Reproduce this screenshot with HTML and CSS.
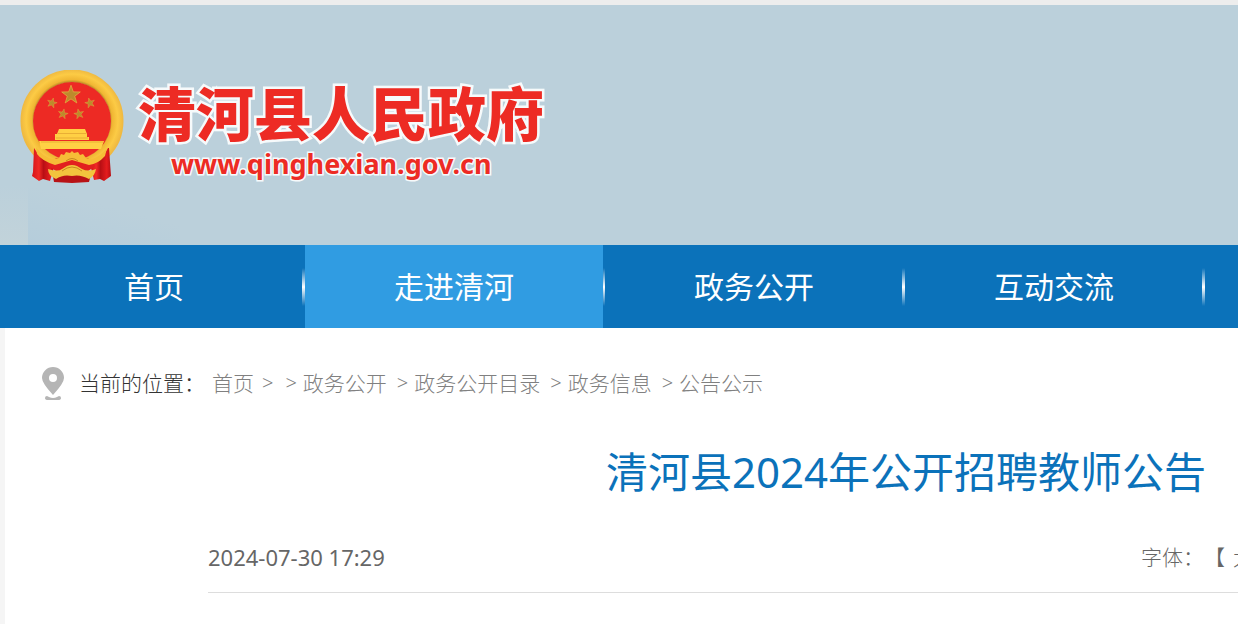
FILE: index.html
```html
<!DOCTYPE html>
<html lang="zh-CN">
<head>
<meta charset="utf-8">
<meta name="viewport" content="width=device-width, initial-scale=1">
<title>清河县2024年公开招聘教师公告</title>
<link rel="stylesheet" href="styles.css">
</head>
<body>
<header class="banner">
  <svg class="emblem" viewBox="0 0 104 114" aria-hidden="true">
    <defs>
      <radialGradient id="gold" gradientUnits="userSpaceOnUse" cx="52" cy="50" r="51">
        <stop offset=".75" stop-color="#c39029"/>
        <stop offset=".79" stop-color="#f0b633"/>
        <stop offset=".9" stop-color="#fccb45"/>
        <stop offset="1" stop-color="#efb941"/>
      </radialGradient>
      <linearGradient id="cloth" x1="0" x2="1" y1="0" y2="0">
        <stop offset="0" stop-color="#d5141a"/>
        <stop offset=".3" stop-color="#f02a25"/>
        <stop offset=".5" stop-color="#b90f14"/>
        <stop offset=".8" stop-color="#e41c1e"/>
        <stop offset="1" stop-color="#b60d12"/>
      </linearGradient>
      <path id="star" d="M0-10 2.4-3.2 9.5-3.1 3.8 1.2 5.900 8.1 0 4-5.900 8.1-3.8 1.2-9.5-3.1-2.4-3.2Z"/>
    </defs>
    <path d="M32 101h40l-3 11-17 1-18-1z" fill="#b81316"/>
    <circle cx="52" cy="51" r="45" fill="none" stroke="url(#gold)" stroke-width="13"/>
    <circle cx="52" cy="51" r="39" fill="#ed2a24"/>
    <g fill="#bd8a2c" stroke="#e7b443" stroke-width=".7">
      <use href="#star" transform="translate(51 25) scale(.98)"/>
      <use href="#star" transform="translate(32 33) rotate(15) scale(.52)"/>
      <use href="#star" transform="translate(70 33) rotate(-15) scale(.52)"/>
      <use href="#star" transform="translate(43 44) rotate(12) scale(.52)"/>
      <use href="#star" transform="translate(59 44) rotate(-12) scale(.52)"/>
    </g>
    <path d="M39 59h26l2 5H37zM35 64h32v5H35zM19 71h65l-3 8H21zM35 67h34v3H35z" fill="#ffd044"/>
    <path d="M38 63.500h28M36 68h32M21 72h62" stroke="#dfa12f" stroke-width=".7"/>
    <path d="M14 78q5 10 21 16l-5 17-7-2-4 2-7-5 1-4 1-24z" fill="url(#cloth)"/>
    <path d="M88 78q-5 11-18 16l4 16 6-1 4 2 7-5-2-28z" fill="url(#cloth)"/>
    <path d="M36 88h32l7 8-11 8H40l-11-8z" fill="#e2201f"/>
    <path d="M16 77q7 10 17 12l6-1 2-4 3 1 2-3 4 1 2-2 2 2 4-1 2 3 3-1 3 4 6 1q9-3 15-11l-2 8q-7 8-16 9l-17-5-17 5q-13-4-18-11z" fill="#f6bd37"/>
    <path d="M28 99q10 3 14 0l5-3q5-2 10 0l5 3q6 3 14 0-1 7-7 10-9-5-17-3-9-2-16 3-8-3-8-10z" fill="#f2c53d"/>
    <path d="M42 101q10-8 20 0M46 91q6-5 12 0" fill="none" stroke="#c78a20" stroke-width="1"/>
  </svg>
  <div class="brand">
    <div class="brand-name">清河县人民政府</div>
    <div class="brand-url">www.qinghexian.gov.cn</div>
  </div>
</header>

<nav class="nav" aria-label="主导航">
  <ul class="nav-list">
    <li class="nav-item"><a class="nav-link" href="#">首页</a></li>
    <li class="nav-item"><a class="nav-link nav-link-active" href="#">走进清河</a></li>
    <li class="nav-item"><a class="nav-link" href="#">政务公开</a></li>
    <li class="nav-item"><a class="nav-link" href="#">互动交流</a></li>
  </ul>
</nav>

<main class="page">
  <div class="crumbs">
    <svg class="pin" viewBox="0 0 22 34" aria-hidden="true">
      <path fill="#b5b5b5" fill-rule="evenodd" d="M11 1A11 11 0 0 0 0 12q0 5 11 17Q22 17 22 12A11 11 0 0 0 11 1Zm0 7a4 4 0 1 1 0 8 4 4 0 0 1 0-8Z"/>
      <path fill="#b5b5b5" d="M5 30q-2 0-2 2 0 2 3 2h10q3 0 3-2 0-2-2-2l-2 1q-4 2-8 0z"/>
    </svg>
    <span class="crumbs-label">当前的位置：</span>
    <a class="crumb" href="#">首页</a>
    <span class="sep sep-first">&gt;</span>
    <span class="sep">&gt;</span><a class="crumb" href="#">政务公开</a>
    <span class="sep">&gt;</span><a class="crumb" href="#">政务公开目录</a>
    <span class="sep">&gt;</span><a class="crumb" href="#">政务信息</a>
    <span class="sep">&gt;</span><a class="crumb" href="#">公告公示</a>
  </div>
  <h1 class="title">清河县2024年公开招聘教师公告</h1>
  <div class="meta">
    <time class="date" datetime="2024-07-30T17:29">2024-07-30 17:29</time>
    <div class="size"><span>字体：</span><span>【</span><button class="size-button" type="button">大</button></div>
  </div>
</main>
</body>
</html>
```
FILE: styles.css
```css
* {
  box-sizing: border-box;
}

body {
  margin: 0;
  min-height: 100vh;
  display: flex;
  flex-direction: column;
  overflow-x: hidden;
  background: #f5f5f5;
  font-family: "Noto Sans", "Noto Sans CJK SC", sans-serif;
}

a {
  color: inherit;
  text-decoration: none;
}

.banner {
  display: flex;
  align-items: flex-start;
  gap: 14px;
  height: 245px;
  padding: 65px 20px 0;
  border-top: 5px solid #ededed;
  background:
    linear-gradient(transparent, #c2d3da) left bottom / 28px 60px no-repeat,
    linear-gradient(15deg, #b5cddb, transparent 60%) 28px 100% / 152px 60px no-repeat,
    #bbd0db;
}

.emblem {
  flex: none;
  width: 104px;
  height: 114px;
}

.brand {
  color: #ed2b24;
  font-weight: 900;
  white-space: nowrap;
  -webkit-text-stroke: 5px #f6fafb;
  paint-order: stroke fill;
}

.brand-name {
  padding-top: 6px;
  font-family: "Noto Sans CJK SC", sans-serif;
  font-size: 58px;
  line-height: 70px;
}

.brand-url {
  padding-top: 4px;
  padding-left: 33px;
  font-size: 27px;
  font-weight: 700;
  line-height: 28px;
  -webkit-text-stroke-width: 3px;
}

.nav {
  background: #0b72ba;
}

.nav-list {
  display: flex;
  margin: 0;
  padding: 0 0 0 5px;
  list-style: none;
}

.nav-item {
  flex: none;
  width: 300px;
  padding-right: 2px;
  background: linear-gradient(#0b72ba, #ffffff 50%, #0b72ba) right center / 3px 38px no-repeat;
}

.nav-link {
  display: block;
  color: #ffffff;
  font-size: 30px;
  line-height: 83px;
  text-align: center;
}

.nav-link-active {
  background: #309ce2;
}

.page {
  flex: 1;
  margin-left: 5px;
  background: #ffffff;
}

.crumbs {
  display: flex;
  align-items: center;
  padding: 38px 0 0 37px;
  color: #808080;
  font-size: 21px;
  font-weight: 300;
  line-height: 34px;
  white-space: nowrap;
}

.pin {
  width: 22px;
  height: 34px;
  margin-right: 15px;
}

.crumbs-label {
  margin-right: 7px;
  color: #333333;
}

.sep {
  margin: 0 6px 0 10px;
  font-size: 20px;
}

.sep-first {
  margin: 0 2px 0 8px;
}

.title {
  margin: 40px 32px 0 0;
  color: #0b72ba;
  font-size: 42px;
  font-weight: 400;
  line-height: 64px;
  text-align: right;
  white-space: nowrap;
}

.meta {
  display: flex;
  justify-content: space-between;
  margin: 36px 0 0 203px;
  padding-bottom: 18px;
  border-bottom: 1px solid #dddddd;
  color: #666666;
  font-size: 22px;
  line-height: 34px;
}

.size {
  display: flex;
  width: 97px;
  overflow: hidden;
  font-size: 21px;
  font-weight: 300;
  white-space: nowrap;
}

.size-button {
  flex: none;
  margin: 0 0 0 8px;
  padding: 0;
  border: 0;
  background: none;
  color: inherit;
  font: inherit;
}
```
